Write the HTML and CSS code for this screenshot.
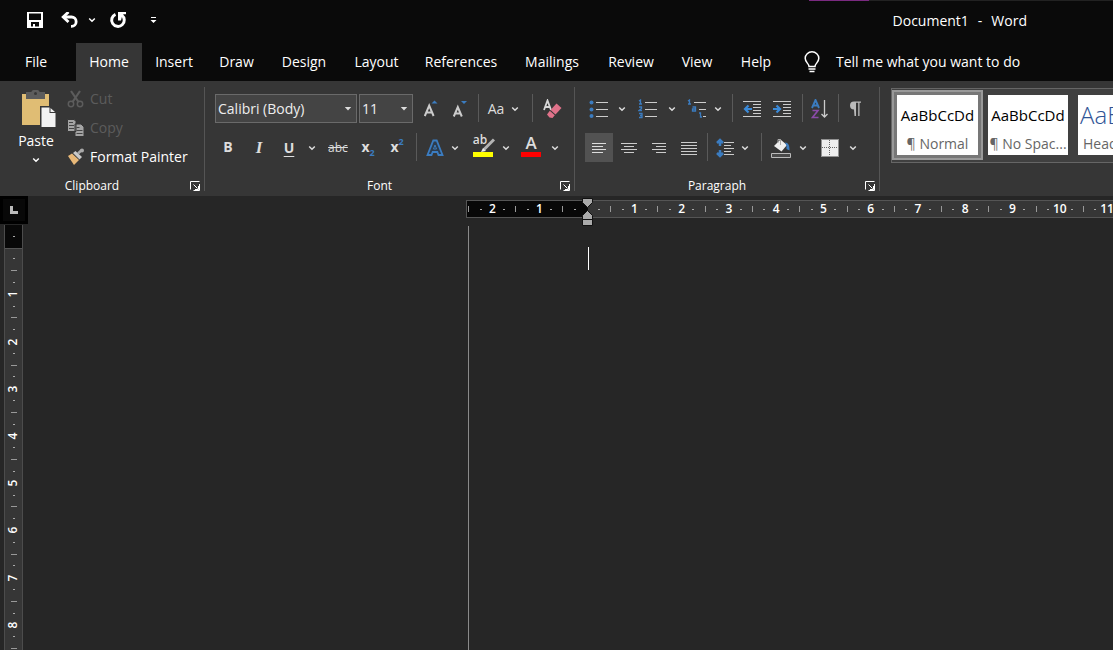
FILE: index.html
```html
<!DOCTYPE html>
<html lang="en">
<head>
<meta charset="utf-8">
<meta name="viewport" content="width=device-width, initial-scale=1">
<title>Document1 - Word</title>
<link rel="stylesheet" href="styles.css">
</head>
<body>
<svg class="defs" width="0" height="0" aria-hidden="true">
  <symbol id="chev" viewBox="0 0 8 8"><path d="M1.200 2.500 4 5.200 6.800 2.500" fill="none" stroke="currentColor" stroke-width="1.500"/></symbol>
  <symbol id="caret" viewBox="0 0 8 8"><path d="M.8 2h6.400L4 5.500z" fill="currentColor"/></symbol>
  <symbol id="launch" viewBox="0 0 10 10"><path d="M.5 8.500v-8h9M3.500 3.500l4 4M9.500 3v6.500H3.500M8.500 5v3.500H5" fill="none" stroke="currentColor"/></symbol>
</svg>

<header class="titlebar">
  <div class="quick">
    <button aria-label="Save"><svg width="16" height="16" viewBox="0 0 16 16"><path d="M0 0h16v16H0zM2 1.500V8h12V1.500zM4 10v4.500h2V12h2v2.500h4V10z" fill="currentColor" fill-rule="evenodd"/></svg></button>
    <button class="undo" aria-label="Undo"><svg width="18" height="16" viewBox="0 0 18 16"><path d="M3 5h7.500a4.500 4.500 0 0 1 0 9.300H10" fill="none" stroke="currentColor" stroke-width="2.800"/><path d="M7.500 0 2.200 5l5.300 5" fill="none" stroke="currentColor" stroke-width="2.800"/></svg></button>
    <button aria-label="Undo options"><svg width="8" height="8"><use href="#chev"/></svg></button>
    <button aria-label="Repeat"><svg width="18" height="18" viewBox="0 0 18 18"><path d="M6.500 3.300a6.300 6.300 0 1 0 6.300.8" fill="none" stroke="currentColor" stroke-width="3"/><path d="M9 1h8v2.200h-2.500L13 5.500l-1 4H9z" fill="currentColor"/></svg></button>
    <button aria-label="Customize Quick Access Toolbar"><svg width="7" height="8" viewBox="0 0 7 8"><path d="M1 1h5v1H1zM.5 4h6l-3 3z" fill="currentColor"/></svg></button>
  </div>
  <h1 class="doc-title"><span>Document1</span><span>-</span><span>Word</span></h1>
</header>

<nav class="tabs">
  <button>File</button>
  <button class="active">Home</button>
  <button>Insert</button>
  <button>Draw</button>
  <button>Design</button>
  <button>Layout</button>
  <button>References</button>
  <button>Mailings</button>
  <button>Review</button>
  <button>View</button>
  <button>Help</button>
  <button class="tell"><svg width="16" height="22" viewBox="0 0 16 22"><path d="M5 15.500c0-3-3.800-4-3.800-8.200a6.800 6.500 0 0 1 13.600 0c0 4.200-3.800 5.200-3.800 8.200z" fill="none" stroke="currentColor" stroke-width="1.500"/><path d="M4.500 18h7M5.500 20.500h5" stroke="currentColor" stroke-width="1.500"/></svg>Tell me what you want to do</button>
</nav>

<section class="ribbon">
  <div class="group clipboard">
    <div class="clip-body">
      <button class="paste">
        <svg width="36" height="38" viewBox="0 0 36 38"><path d="M1 4h27v31H1z" fill="#e0bd74"/><path d="M5 2h5.500c0-3 8-3 8 0H24v7H5z" fill="#5c5c5c"/><circle cx="14.500" cy="3.500" r="1.500" fill="#363636"/><path d="M19 16h10l6 6v16H19z" fill="#363636"/><path d="M20.500 17.500h8v5.500h6V37h-14z" fill="#f2f2f2"/><path d="m29.500 18 4.500 4h-4.500z" fill="#f2f2f2"/></svg>
        <span>Paste</span>
        <svg width="8" height="8"><use href="#chev"/></svg>
      </button>
      <div class="clip-list">
        <button disabled><svg width="18" height="18" viewBox="0 0 18 18" fill="none" stroke="currentColor"><path d="M4 1l7.500 11M13 1 5.500 12" stroke-width="2.200"/><circle cx="4" cy="14" r="2.700" stroke-width="1.500"/><circle cx="13" cy="14" r="2.700" stroke-width="1.500"/></svg>Cut</button>
        <button disabled><svg width="18" height="18" viewBox="0 0 18 18"><path d="M.5.500h6.500l2 2v10H.5zM8 5h6l3 3v9.500H8z" fill="#a4a4a4" stroke="#363636"/><path d="M2 3.500h4M2 6.500h5M2 9.500h5M9.500 8.500h3M9.500 11.500h6M9.500 14.500h6" stroke="#444"/></svg>Copy</button>
        <button><svg width="18" height="18" viewBox="0 0 18 18"><path d="m1 8 4-2.500 7 6.500-5 5z" fill="#e8b878"/><path d="m6 5 2.500-2 6.500 6-2.500 2.500z" fill="#c9c9c9"/><path d="m11 5.500 3.500-3.300" stroke="#a9a9a9" stroke-width="2.500"/><circle cx="15" cy="2.500" r="2" fill="#a9a9a9"/></svg>Format Painter</button>
      </div>
    </div>
    <footer><span>Clipboard</span><button aria-label="Clipboard settings"><svg width="10" height="10"><use href="#launch"/></svg></button></footer>
  </div>

  <div class="group font">
    <div class="row font-a">
      <label class="combo"><select aria-label="Font"><option>Calibri (Body)</option></select><svg width="8" height="8"><use href="#caret"/></svg></label>
      <label class="combo"><select aria-label="Font size"><option>11</option></select><svg width="8" height="8"><use href="#caret"/></svg></label>
      <button aria-label="Increase font size"><svg width="14" height="18" viewBox="0 0 14 18"><path d="m.8 16 4.400-10.500L9.600 16M2.500 12.500h5.500" fill="none" stroke="#ccc" stroke-width="2"/><path d="m7.500 3.500 3-3 3 3z" fill="#3b7cc0"/></svg></button>
      <button aria-label="Decrease font size"><svg width="16" height="18" viewBox="0 0 16 18"><path d="m1.800 16.500 4-9.500 4 9.500M3.500 13.500h5" fill="none" stroke="#ccc" stroke-width="2"/><path d="m9 1 3 3 3-3z" fill="#3b7cc0"/></svg></button>
      <hr>
      <button>Aa</button>
      <button aria-label="Case options"><svg width="8" height="8"><use href="#chev"/></svg></button>
      <hr>
      <button aria-label="Clear formatting"><svg width="19" height="20" viewBox="0 0 19 20"><path d="M1 11 4.500 1.500 8 11M2 8h5" fill="none" stroke="#d8d8d8" stroke-width="1.800"/><path d="m13.500 4.500 5 4.500-6 6.500-5-4.500z" fill="#e0728a"/><path d="m6.800 11.800 5 4.500-2.300 2.700-3-.5-2.500-3z" fill="#e0728a"/></svg></button>
    </div>
    <div class="row font-b">
      <button class="bold">B</button>
      <button class="italic">I</button>
      <button class="under">U</button>
      <button aria-label="Underline options"><svg width="8" height="8"><use href="#chev"/></svg></button>
      <button class="strike">abc</button>
      <button class="bold">x<sub>2</sub></button>
      <button class="bold">x<sup>2</sup></button>
      <hr>
      <button aria-label="Text effects"><svg width="18" height="18" viewBox="0 0 18 18"><path d="M7.300 1.500h3.400L16.500 16h-4l-1.200-3H6.700l-1.200 3h-4z" fill="#2c3c4e" stroke="#3b7cc0" stroke-width="1.800"/><path d="m9 6-1.500 4h3z" fill="#363636" stroke="#3b7cc0"/></svg></button>
      <button aria-label="Effect options"><svg width="8" height="8"><use href="#chev"/></svg></button>
      <button class="ink mark"><span>ab</span><svg width="16" height="16" viewBox="0 0 16 16"><path d="M5 12.500 15 2.500" stroke="#b4b4b4" stroke-width="3"/><path d="m2 15 2-4 3 3z" fill="#eee"/></svg></button>
      <button aria-label="Highlight options"><svg width="8" height="8"><use href="#chev"/></svg></button>
      <button class="ink color"><span>A</span></button>
      <button aria-label="Colour options"><svg width="8" height="8"><use href="#chev"/></svg></button>
    </div>
    <footer><span>Font</span><button aria-label="Font settings"><svg width="10" height="10"><use href="#launch"/></svg></button></footer>
  </div>

  <div class="group para">
    <div class="row para-a">
      <button aria-label="Bullets"><svg width="20" height="18" viewBox="0 0 20 18"><g fill="#3b7cc0"><circle cx="2.500" cy="2.500" r="2"/><circle cx="2.500" cy="9.500" r="2"/><circle cx="2.500" cy="16" r="2"/></g><path d="M7 2.500h12M7 9.500h12M7 16.500h12" stroke="#ccc"/></svg></button>
      <button aria-label="Bullet options"><svg width="8" height="8"><use href="#chev"/></svg></button>
      <button aria-label="Numbering"><svg width="20" height="20" viewBox="0 0 20 20"><path d="M1 2l1.500-1v4M1 5h3M1 8h2.500v1.500L1 11.500h3M1 14.500h3v4H1m1-2h2" fill="none" stroke="#3b7cc0" stroke-width="1.300"/><path d="M7 3.500h12M7 10.500h12M7 17.500h12" stroke="#ccc"/></svg></button>
      <button aria-label="Numbering options"><svg width="8" height="8"><use href="#chev"/></svg></button>
      <button aria-label="Multilevel list"><svg width="20" height="20" viewBox="0 0 20 20"><path d="M1 2l1.500-1v4M1 5h3M5.500 8h3v4h-3v-2h3M12 14h1.500v4H15" fill="none" stroke="#3b7cc0" stroke-width="1.300"/><path d="M7 3.500h12M12 10.500h7M16 17.500h3" stroke="#ccc"/></svg></button>
      <button aria-label="Multilevel options"><svg width="8" height="8"><use href="#chev"/></svg></button>
      <hr>
      <button aria-label="Decrease indent"><svg width="18" height="18" viewBox="0 0 18 18"><path d="M0 1.500h18M10 4.500h8M10 7.500h8M10 10.500h8M10 13.500h8M0 16.500h18" stroke="#ccc"/><path d="M9 9H2m3.500-3.500L2 9l3.500 3.500" fill="none" stroke="#3b8ad8" stroke-width="2.200"/></svg></button>
      <button aria-label="Increase indent"><svg width="18" height="18" viewBox="0 0 18 18"><path d="M0 1.500h18M10 4.500h8M10 7.500h8M10 10.500h8M10 13.500h8M0 16.500h18" stroke="#ccc"/><path d="M0 9h7M3.500 5.500 7 9l-3.500 3.500" fill="none" stroke="#3b8ad8" stroke-width="2.200"/></svg></button>
      <hr>
      <button aria-label="Sort"><svg width="18" height="20" viewBox="0 0 18 20"><path d="m1 9 3.500-8L8 9M2.500 6.500h4" fill="none" stroke="#3b7cc0" stroke-width="1.900"/><path d="M1.500 11.500H7L1.500 18.500h6" fill="none" stroke="#8a4ba8" stroke-width="1.600"/><path d="M13.500 1v17M10.500 15l3 3 3-3" fill="none" stroke="#ccc" stroke-width="1.300"/></svg></button>
      <hr>
      <button aria-label="Show marks"><svg width="12" height="16" viewBox="0 0 12 16"><path d="M5 8.500a4 4 0 0 1 0-8h7v1.200h-1.500V15H9.200V1.700H7V15H5.500z" fill="#bbb"/></svg></button>
    </div>
    <div class="row para-b">
      <button class="on" aria-label="Align left"><svg width="16" height="14" viewBox="0 0 16 14"><path d="M1 2.500h14M1 5.500h11M1 8.500h14M1 11.500h11" stroke="#ddd"/></svg></button>
      <button aria-label="Centre"><svg width="16" height="14" viewBox="0 0 16 14"><path d="M0 2.500h16M3 5.500h10M0 8.500h16M3 11.500h10" stroke="#ccc"/></svg></button>
      <button aria-label="Align right"><svg width="16" height="14" viewBox="0 0 16 14"><path d="M1 2.500h14M5 5.500h10M1 8.500h14M5 11.500h10" stroke="#ccc"/></svg></button>
      <button aria-label="Justify"><svg width="16" height="14" viewBox="0 0 16 14"><path d="M0 1.500h16M0 4.500h16M0 7.500h16M0 10.500h16M0 13.500h16" stroke="#ccc"/></svg></button>
      <hr>
      <button aria-label="Line spacing"><svg width="18" height="20" viewBox="0 0 18 20"><path d="M4 2v6M1 5l3-3 3 3M4 12v6M1 15l3 3 3-3" fill="none" stroke="#3b7cc0" stroke-width="2.500"/><path d="M8 4.500h10M8 7.500h7M8 10.500h10M8 13.500h7M8 16.500h10" stroke="#ccc"/></svg></button>
      <button aria-label="Spacing options"><svg width="8" height="8"><use href="#chev"/></svg></button>
      <hr>
      <button aria-label="Shading"><svg width="20" height="20" viewBox="0 0 20 20"><path d="m3 8 6.500-6.500L16 7l-5.500 6.500z" fill="#eee"/><path d="M7 5V1.500h2.500V7" fill="none" stroke="#aaa"/><path d="M14 4.500c4 0 4.500 4 4.500 8l-3-1.500V8z" fill="#3b7cc0"/><path d="M.5 15.500h19v4H.5z" fill="#4a4a4a" stroke="#bbb"/></svg></button>
      <button aria-label="Shading options"><svg width="8" height="8"><use href="#chev"/></svg></button>
      <button aria-label="Borders"><svg width="18" height="18" viewBox="0 0 18 18"><path d="M1 1h16v16H1z" fill="#eee"/><path d="M.5.500h17v17H.5z" fill="none" stroke="#eee" stroke-dasharray="1 1"/><path d="M8.500 1v16M1 8.500h16" stroke="#666" stroke-dasharray="1 1"/></svg></button>
      <button aria-label="Border options"><svg width="8" height="8"><use href="#chev"/></svg></button>
    </div>
    <footer><span>Paragraph</span><button aria-label="Paragraph settings"><svg width="10" height="10"><use href="#launch"/></svg></button></footer>
  </div>

  <div class="styles">
    <div class="gallery">
      <button class="style selected"><span class="sample">AaBbCcDd</span><span class="name">¶ Normal</span></button>
      <button class="style"><span class="sample">AaBbCcDd</span><span class="name">¶ No Spac...</span></button>
      <button class="style heading"><span class="sample">AaBbCc</span><span class="name">Heading 1</span></button>
    </div>
  </div>
</section>

<main class="workspace">
  <aside class="side">
    <button class="tabstop" aria-label="Left tab"><svg width="8" height="8" viewBox="0 0 8 8"><path d="M1.500 0v6.500H8" fill="none" stroke="#bbb" stroke-width="3"/></svg></button>
    <div class="vruler">
      <div class="vmargin"><i></i></div>
      <div class="vtrack">
        <span class="unit"><i></i><b></b><i></i><em>1</em></span>
        <span class="unit"><i></i><b></b><i></i><em>2</em></span>
        <span class="unit"><i></i><b></b><i></i><em>3</em></span>
        <span class="unit"><i></i><b></b><i></i><em>4</em></span>
        <span class="unit"><i></i><b></b><i></i><em>5</em></span>
        <span class="unit"><i></i><b></b><i></i><em>6</em></span>
        <span class="unit"><i></i><b></b><i></i><em>7</em></span>
        <span class="unit"><i></i><b></b><i></i><em>8</em></span>
        <span class="unit"><i></i><b></b><i></i></span>
      </div>
    </div>
  </aside>
  <div class="canvas">
    <div class="hruler">
      <div class="hmargin">
        <span class="unit"><b></b><i></i><em>2</em><i></i></span>
        <span class="unit"><b></b><i></i><em>1</em><i></i></span>
        <span class="unit"><b></b><i></i></span>
      </div>
      <svg class="indent" width="11" height="28" viewBox="0 0 11 28"><path d="M.5.500h10v4l-5 5-5-5zM5.500 12.500l5 5v4H.5v-4zM.5 21.500h10v6H.5z" fill="#aaa" stroke="#111"/></svg>
      <div class="htrack">
        <span class="unit"><i></i><b></b><i></i><em>1</em></span>
        <span class="unit"><i></i><b></b><i></i><em>2</em></span>
        <span class="unit"><i></i><b></b><i></i><em>3</em></span>
        <span class="unit"><i></i><b></b><i></i><em>4</em></span>
        <span class="unit"><i></i><b></b><i></i><em>5</em></span>
        <span class="unit"><i></i><b></b><i></i><em>6</em></span>
        <span class="unit"><i></i><b></b><i></i><em>7</em></span>
        <span class="unit"><i></i><b></b><i></i><em>8</em></span>
        <span class="unit"><i></i><b></b><i></i><em>9</em></span>
        <span class="unit"><i></i><b></b><i></i><em>10</em></span>
        <span class="unit"><i></i><b></b><i></i><em>11</em></span>
      </div>
    </div>
    <div class="page"><div class="cursor"></div></div>
  </div>
</main>
</body>
</html>
```
FILE: styles.css
```css
* { box-sizing: border-box; }
body {
  margin: 0;
  height: 100vh;
  overflow: hidden;
  display: flex;
  flex-direction: column;
  background: #262626;
  color: #fff;
  font: 14px/20px "Open Sans", "Noto Sans", sans-serif;
}
button {
  margin: 0;
  padding: 0;
  border: 0;
  background: none;
  color: inherit;
  font: inherit;
  white-space: nowrap;
}
svg { display: block; flex: none; }
.defs { position: absolute; }

.titlebar {
  flex: none;
  height: 43px;
  display: flex;
  justify-content: space-between;
  background: linear-gradient(90deg, #7a2a80 0 60px, #222 60px) right top / 304px 1px no-repeat #0a0a0a;
}
.quick {
  display: grid;
  grid-template-columns: 22px 12px 24px 20px 32px 38px;
  height: 40px;
  padding-left: 24px;
}
.quick button, .row button { display: flex; align-items: center; justify-content: center; }
.quick .undo { grid-column: 3; }
.doc-title {
  display: flex;
  gap: 9px;
  margin: 0;
  padding: 11px 86px 0 0;
  font-size: 14px;
  font-weight: 400;
}

.tabs {
  flex: none;
  height: 38px;
  display: grid;
  grid-template-columns: 76px 66px 64px 61px 74px 71px 98px 84px 74px 58px 60px auto;
  justify-content: start;
  background: #0a0a0a;
}
.tabs button:first-child { padding-right: 4px; }
.tabs .active { background: #363636; }
.tabs .tell { display: flex; align-items: center; gap: 16px; padding-left: 18px; }

.ribbon {
  flex: none;
  height: 115px;
  display: flex;
  background: #363636;
  overflow: hidden;
}
.group {
  flex: none;
  display: flex;
  flex-direction: column;
  position: relative;
  padding: 13px 0 0 10px;
}
.group::after {
  content: "";
  position: absolute;
  right: 0;
  top: 6px;
  bottom: 5px;
  width: 1px;
  background: #555;
}
.clipboard { width: 205px; padding: 5px 0 0 15px; }
.font { width: 370px; }
.para { width: 305px; }
.group footer {
  margin-top: auto;
  height: 21px;
  padding-right: 5px;
  display: grid;
  grid-template-columns: 1fr 10px;
  align-items: center;
  text-align: center;
  font-size: 12px;
}
.clipboard footer span { padding-right: 21px; }
.font footer span { padding-right: 16px; }
.para footer span { padding-right: 16px; }

.clip-body { display: flex; }
.paste {
  width: 42px;
  display: flex;
  flex-direction: column;
  align-items: center;
  padding-top: 4px;
}
.paste span { margin: 3px 0 5px; }
.paste > svg:first-child { align-self: flex-end; }
.clip-list { display: grid; grid-template-rows: repeat(3, 29px); padding-left: 10px; margin-top: -2px; }
.clip-list button { display: flex; align-items: center; gap: 5px; }
.clip-list button:disabled { color: #5c5c5c; }

.row { display: grid; height: 29px; margin-bottom: 10px; align-items: stretch; color: #ddd; }
.row hr { width: 1px; height: 28px; margin: 0; border: 0; background: #5a5a5a; justify-self: center; }
.row + .row { margin-bottom: 0; }
.font-a { grid-template-columns: 142px 2px 54px 36px 22px 14px 22px 16px 18px 22px; }
.font-a .combo:nth-child(2) { grid-column: 3; }
.font-b { grid-template-columns: 26px 36px 24px 22px 30px 30px 28px 10px 28px 12px 44px 2px 48px 0; }
.para-a { grid-template-columns: 27px 20px 32px 16px 34px 8px 20px 20px 40px 0 36px 0 34px; }
.para-b { grid-template-columns: 28px 32px 28px 32px 4px 32px 8px 24px 16px 28px 26px 20px; }
.para-b .on { background: #525252; }

.combo { display: grid; align-items: center; }
.combo select {
  grid-area: 1 / 1;
  appearance: none;
  width: 100%;
  height: 29px;
  margin: 0;
  padding: 0 2px;
  border: 1px solid #6a6a6a;
  border-radius: 0;
  background: #444;
  color: #eee;
  font: inherit;
}
.combo svg { grid-area: 1 / 1; justify-self: end; margin-right: 5px; pointer-events: none; }
.row .bold { font-weight: 700; align-items: baseline; line-height: 28px; }
.row .italic { font: italic 700 17px/20px "Liberation Serif", serif; }
.row .under { font-weight: 700; text-decoration: underline; text-underline-offset: 3px; }
.row .strike { font-size: 12px; text-decoration: line-through; }
.bold sub, .bold sup { color: #3b7cc0; font-size: 9px; line-height: 10px; vertical-align: baseline; }
.bold sub { align-self: end; padding-bottom: 4px; }
.bold sup { align-self: start; padding-top: 4px; }
.row .ink { position: relative; align-items: flex-start; line-height: 16px; }
.ink::after { content: ""; position: absolute; top: 19px; width: 20px; height: 5px; background: #f00; }
.mark::after { background: #ff0; }
.mark span { font-size: 12px; font-weight: 600; line-height: 14px; padding-right: 6px; }
.mark svg { position: absolute; left: 18px; top: 4px; }
.color span { font-size: 17px; font-weight: 600; line-height: 20px; }

.styles { flex: 1; min-width: 0; padding: 7px 0 0 11px; overflow: hidden; }
.gallery {
  display: flex;
  height: 75px;
  padding: 1px 0 0;
  border: 1px solid #666;
  border-right: 0;
  background: #404040;
}
.style {
  flex: none;
  width: 90px;
  height: 70px;
  padding: 5px;
  display: flex;
  flex-direction: column;
  color: #000;
}
.style.selected { width: 91px; background: #777; border: 2px solid #999; padding: 3px; }
.style .sample, .style .name { background: #fff; width: 100%; overflow: hidden; text-align: center; }
.style .sample { height: 38px; padding-top: 9px; font-size: 15px; line-height: 22px; }
.style .name { height: 22px; color: #666; line-height: 22px; }
.heading .sample { color: #2f5496; font-size: 24px; font-weight: 300; text-align: left; padding-left: 2px; }
.heading .name { text-align: left; padding-left: 5px; }

.workspace { flex: 1; min-height: 0; display: flex; overflow: hidden; }
.side { flex: none; width: 28px; display: flex; flex-direction: column; }
.tabstop {
  flex: none;
  height: 28px;
  display: flex;
  align-items: center;
  justify-content: center;
  background: #080808;
  border: 3px solid #000;
}
.vruler { flex: none; width: 19px; margin: 1px 0 0 4px; border: solid #4c4c4c; border-width: 0 1px; background: #363636; }
.vmargin { height: 24px; background: #080808; display: grid; place-items: center; border-bottom: 1px solid #555; }
.vtrack { display: grid; grid-auto-rows: 1fr; height: 425px; margin-top: 4px; }
.unit { display: grid; place-items: center; font: 600 12px/16px "Open Sans", sans-serif; min-width: 0; min-height: 0; }
.unit em { font-style: normal; }
.unit i, .vmargin i { width: 2px; height: 1px; background: #aaa; }
.unit b { width: 1px; height: 6px; background: #999; }
.vtrack .unit { grid-template-rows: repeat(4, minmax(0, 1fr)); }
.vtrack b { width: 6px; height: 1px; }
.vtrack em { transform: rotate(-90deg); }

.canvas { flex: 1; min-width: 0; display: flex; flex-direction: column; padding: 4px 0 0 438px; }
.hruler {
  flex: none;
  height: 18px;
  display: flex;
  position: relative;
  background: #363636;
  border: 1px solid #555;
  border-right: 0;
}
.hmargin { width: 121px; flex: none; display: flex; background: #080808; overflow: hidden; }
.hmargin .unit, .htrack .unit { flex: none; grid-template-columns: repeat(4, minmax(0, 1fr)); }
.hmargin .unit { width: 47px; margin-left: -4px; margin-right: 4px; }
.htrack { flex: none; width: 520px; display: grid; grid-template-columns: repeat(11, minmax(0, 1fr)); margin-left: 5px; }
.indent { position: absolute; left: 115px; top: -3px; }
.page { flex: 1; margin: 8px 0 0 2px; border-left: 1px solid #8a8a8a; padding: 21px 0 0 119px; }
.cursor { width: 1px; height: 23px; background: #fff; }
```
